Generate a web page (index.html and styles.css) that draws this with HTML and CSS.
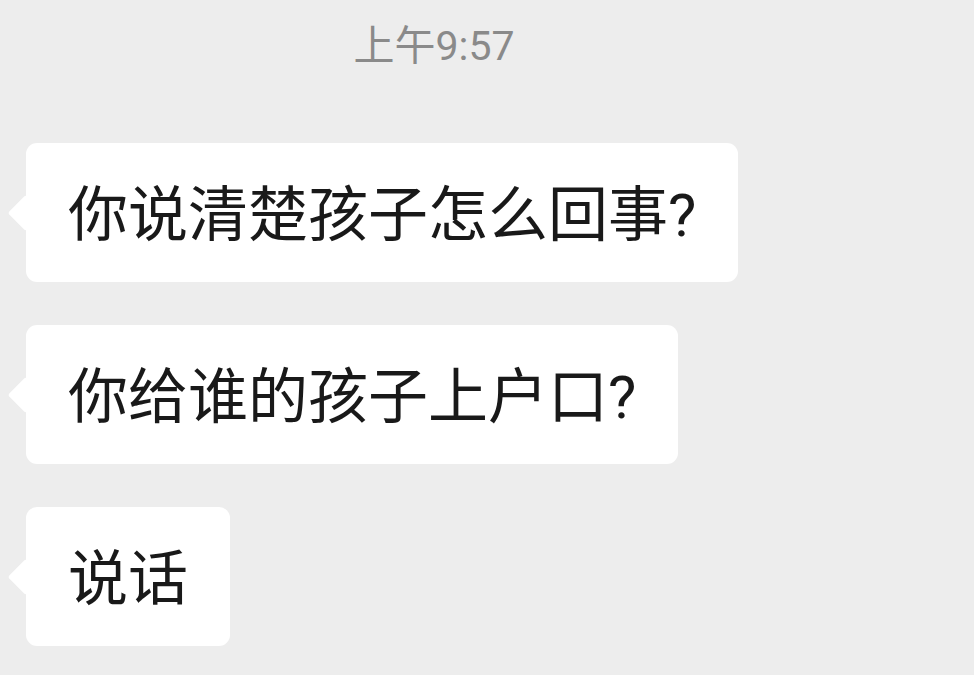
FILE: index.html
```html
<!DOCTYPE html>
<html lang="zh-CN">
<head>
  <meta charset="UTF-8" />
  <title>聊天</title>
  <link rel="stylesheet" href="styles.css">
</head>
<body>
  <div class="hora">上午9:57</div>
  <div class="mensajes">
    <div class="burbuja">你说清楚孩子怎么回事?</div>
    <div class="burbuja">你给谁的孩子上户口?</div>
    <div class="burbuja">说话</div>
  </div>
</body>
</html>
```

FILE: styles.css
```css
body {
  margin: 0;
  background-color: #ededed;
  font-family: Roboto, "Noto Sans CJK SC", sans-serif;
  height: 675px;
  overflow: hidden;
}
.hora {
  width: 868px;
  padding-top: 26px;
  font-size: 41px;
  line-height: 40px;
  text-align: center;
  color: #8a8a8a;
}
.mensajes {
  display: flex;
  flex-direction: column;
  align-items: flex-start;
  gap: 43px;
  margin-top: 77px;
  padding-left: 26px;
}
.burbuja {
  position: relative;
  background-color: #fff;
  color: #191919;
  font-size: 60px;
  line-height: 81px;
  padding: 32px 42px 26px;
  border-radius: 11px;
  white-space: nowrap;
}
.burbuja::before {
  content: "";
  position: absolute;
  left: -13px;
  top: 50%;
  width: 26px;
  height: 26px;
  margin-top: -13px;
  background-color: #fff;
  border-radius: 3px;
  transform: rotate(45deg);
}
```
